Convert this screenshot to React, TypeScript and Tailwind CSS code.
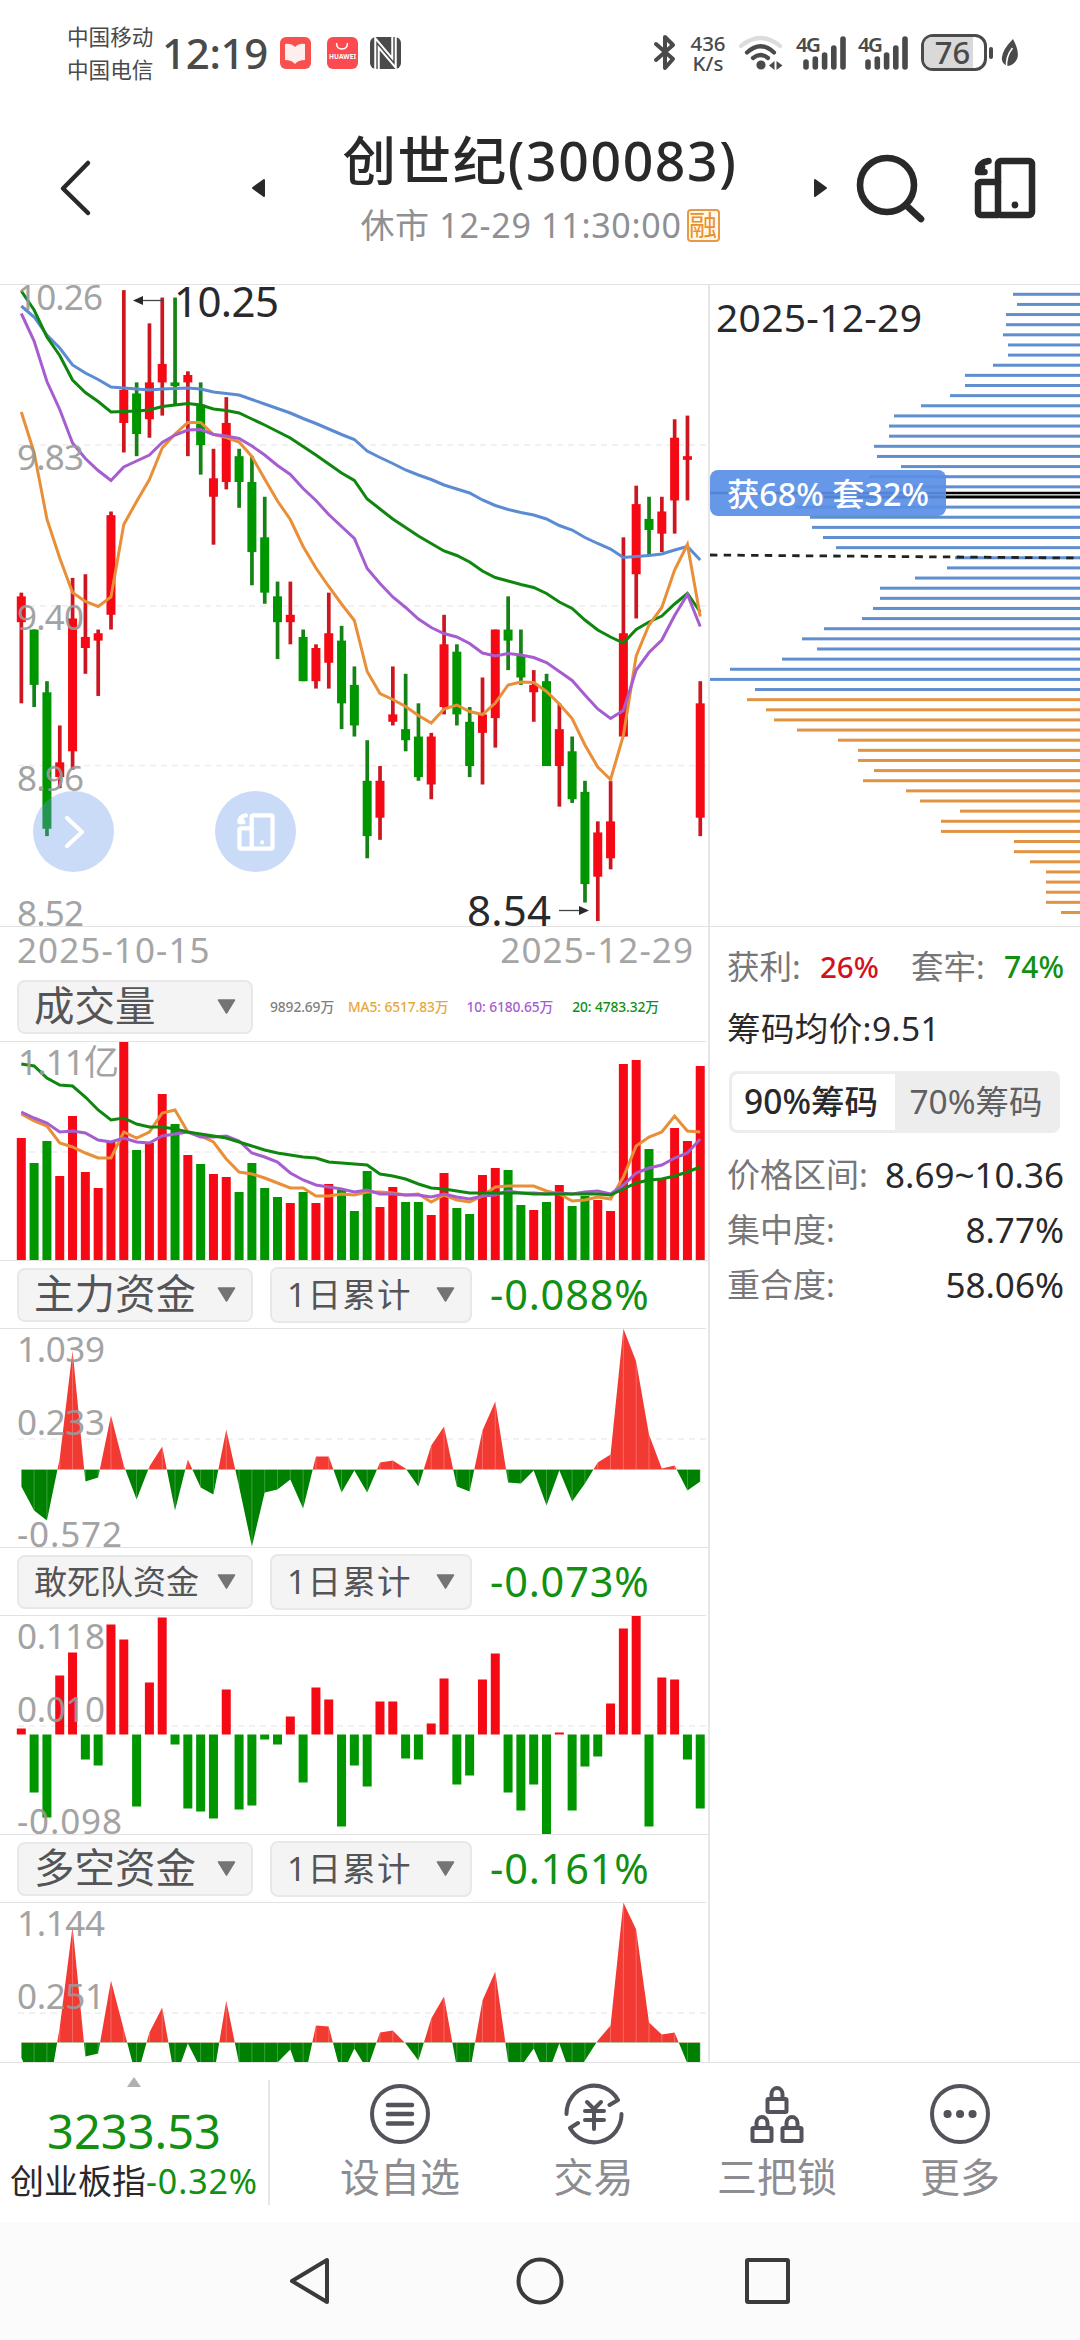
import type { ReactNode } from "react";

type Candle = [open: number, close: number, high: number, low: number];

// Prices in cents, 2025-10-15 .. 2025-12-29
const CANDLES: Candle[] = [
  [935, 942, 943, 913], [933, 918, 933, 912], [916, 879, 919, 877], [893, 897, 907, 890],
  [900, 936, 947, 895], [928, 931, 948, 921], [930, 932, 933, 915], [937, 964, 965, 933],
  [989, 998, 1025, 981], [997, 986, 1000, 980], [990, 1000, 1016, 985], [1000, 1005, 1023, 991],
  [1000, 999, 1023, 994], [1000, 1002, 1003, 980], [994, 983, 1000, 975], [969, 974, 982, 956],
  [973, 989, 996, 971], [980, 973, 982, 966], [973, 954, 980, 945], [958, 943, 969, 940],
  [942, 935, 946, 925], [935, 937, 946, 929], [931, 919, 933, 919], [919, 928, 929, 917],
  [924, 932, 943, 917], [930, 913, 934, 906], [918, 907, 923, 904], [892, 877, 903, 871],
  [882, 892, 896, 876], [908, 910, 923, 907], [906, 903, 921, 900], [904, 893, 913, 892],
  [891, 904, 905, 887], [912, 929, 937, 910], [927, 910, 929, 907], [908, 896, 912, 893],
  [905, 910, 920, 891], [909, 933, 933, 901], [933, 930, 942, 922], [926, 920, 933, 918],
  [916, 918, 922, 908], [919, 896, 921, 896], [896, 906, 913, 885], [900, 887, 904, 886],
  [889, 864, 892, 859], [866, 878, 881, 854], [871, 881, 892, 868], [904, 932, 958, 904],
  [948, 967, 972, 936], [963, 960, 969, 953], [959, 965, 969, 954], [968, 985, 990, 959],
  [979, 980, 991, 968], [882, 913, 919, 877],
];

const PRICE_LINES = [
  {
    color: "#5b8bd0",
    ys: [21, 32, 50, 63, 80, 88, 94.5, 102, 103, 104, 105, 104, 103.5, 103, 104, 107, 108.5, 110, 114.5, 119, 123.5, 128, 133.5, 138.5, 144, 149.5, 154.5, 166, 172.5, 178.5, 185, 190, 194.5, 200, 204, 208, 215, 220.5, 224.5, 227.5, 230, 234, 240.5, 245, 252.5, 258.5, 264, 272.5, 271.5, 270.5, 269, 265, 261.5, 275],
  },
  {
    color: "#0f870f",
    ys: [6, 25, 52, 70.5, 95, 107.5, 116.5, 127, 126.5, 126, 125, 121.5, 120, 118.5, 120, 124, 125.5, 128, 134, 140, 146.5, 153, 161.5, 170, 179, 188, 195.5, 214, 224, 234, 242.5, 251, 258.5, 266, 270.5, 277, 286, 292.5, 296, 299.5, 302.5, 308.5, 317, 323.5, 335, 345, 352, 358, 344.5, 337, 331, 319, 308.5, 327],
  },
  {
    color: "#e88f37",
    ys: [127, 167.5, 234, 273, 307.5, 316.5, 321.5, 312, 239.5, 216.5, 194.5, 163, 149, 137.5, 137.5, 149.5, 152.5, 157, 171.5, 194, 216, 234.5, 261.5, 283, 301.5, 319, 335.5, 386.5, 408.5, 414.5, 421.5, 430.5, 438, 424, 420, 426.5, 429.5, 418, 400, 397, 397.5, 406.5, 419, 433.5, 460, 482, 494.5, 450.5, 371, 340, 322.5, 285, 259.5, 331.5],
  },
  {
    color: "#a65dcf",
    ys: [28.5, 56, 96.5, 124.5, 158, 173.5, 185.5, 195.5, 182, 176, 170, 157.5, 150, 145, 144.5, 149.5, 151, 153.5, 161, 170, 180.5, 189.5, 203.5, 215.5, 229.5, 241.5, 253.5, 283.5, 298.5, 312, 322.5, 334, 342.5, 348.5, 352, 358.5, 368, 371, 368.5, 370, 372.5, 377.5, 386.5, 395.5, 410, 424, 433.5, 425.5, 385, 367.5, 355, 330.5, 309.5, 341.5],
  },
];

const VOLUMES = [123, 98, 120, 85, 145, 89, 73, 119, 219, 111, 118, 167, 137, 106, 97, 87, 84, 69, 98, 73, 64, 58, 69, 58, 77, 71, 50, 90, 54, 74, 59, 59, 46, 88, 53, 47, 86, 93, 91, 56, 51, 59, 76, 55, 65, 61, 50, 197, 201, 112, 82, 133, 120, 195];

const VOLUME_LINES = [
  {
    color: "#e88f37",
    ys: [72, 79, 84, 101, 105, 111, 116, 116, 90, 96, 90, 71, 68, 90, 94, 100, 117, 130, 132, 136, 141, 146, 146, 154, 154, 152, 153, 150, 150, 151, 153, 152, 160, 153, 158, 160, 154, 145, 144, 144, 144, 149, 152, 159, 158, 155, 157, 135, 104, 95, 90, 74, 89, 90],
  },
  {
    color: "#a65dcf",
    ys: [70, 76, 81, 90, 89, 91, 98, 100, 96, 100, 101, 94, 92, 90, 95, 95, 94, 99, 111, 115, 120, 131, 138, 143, 145, 147, 150, 148, 152, 152, 153, 153, 155, 152, 155, 157, 154, 153, 149, 151, 151, 152, 151, 152, 150, 149, 152, 143, 131, 126, 123, 116, 111, 97],
  },
  {
    color: "#0f870f",
    ys: [22, 24, 36, 43, 44, 55, 68, 78, 76, 82, 85, 85, 87, 90, 92, 94, 96, 100, 104, 108, 111, 113, 115, 116, 120, 121, 122, 123, 132, 134, 137, 142, 146, 147, 149, 151, 151, 151, 151, 151, 152, 152, 152, 152, 152, 152, 153, 147, 141, 138, 137, 134, 130, 125],
  },
];

const MAIN_FUNDS = [-17, -41, -51, 11, 119, -12, -8, 54, 4, -30, 3, 23, -41, 10, -18, -25, 40, -17, -77, -23, -20, -10, -39, 13, 13, -23, -1, -23, 7, 9, 1, -17, 24, 43, -17, -22, 39, 68, -13, -14, -1, -36, -1, -32, -14, 7, 15, 141, 108, 35, 1, 4, -21, -12];
const SQUAD_FUNDS = [6, -58, -83, 59, 82, -25, -31, 110, 95, -72, 52, 117, -10, -74, -77, -84, 45, -75, -71, -5, -10, 18, -48, 47, 35, -92, -31, -52, 33, 33, -24, -25, 11, 56, -50, -41, 55, 81, -58, -76, -50, -100, 2, -76, -32, -22, 31, 106, 119, -92, 57, 55, -25, -74];
const LONG_FUNDS = [-15, -45, -60, 15, 116, -14, -11, 62, 13, -36, 10, 35, -37, -1, -26, -35, 42, -21, -70, -35, -20, -7, -43, 17, 16, -33, -6, -27, 10, 12, -1, -18, 24, 46, -25, -31, 42, 71, -19, -24, -6, -35, -1, -37, -18, 2, 17, 140, 113, 20, 8, 10, -21, -21];

// Chip distribution, bar lengths measured from the right edge
const CHIPS_ABOVE = [67, 63, 74, 74, 77, 72, 72, 87, 115, 115, 130, 159, 186, 191, 191, 206, 203, 179, 211, 200, 256, 285, 270, 268, 257, 244, 125, 133, 165, 200, 200, 207, 218, 256, 278, 263, 298, 350, 371, 325];
const CHIPS_BELOW = [333, 314, 306, 283, 242, 222, 222, 206, 217, 174, 160, 120, 139, 139, 66, 66, 50, 34, 34, 34, 34, 19];

const x = (i: number) => 21.3 + 12.81 * i;
const priceY = (p: number) => (1026.4 - p) * 3.689;
const isUp = (c: Candle) => c[1] >= c[0];
const points = (ys: number[]) => ys.map((y, i) => `${x(i)},${y}`).join(" ");

function AxisLabel({ y, w, left = 17, children }: { y: number; w: number; left?: number; children: string }) {
  return (
    <text x={left} y={y} fontSize={35} textLength={w} fill="#9a9a9a" opacity={0.9}>
      {children}
    </text>
  );
}

function Grid({ y }: { y: number }) {
  return <line x1={18} x2={706} y1={y} y2={y} stroke="#ededed" strokeWidth={1.6} strokeDasharray="6 5" />;
}

function PriceChart() {
  return (
    <svg width={709} height={641} className="block">
      {[160, 321, 480.5].map((y) => (
        <Grid key={y} y={y} />
      ))}
      {CANDLES.map((c, i) => {
        const [o, cl, h, l] = c;
        const top = priceY(Math.max(o, cl));
        return (
          <g key={i}>
            <rect x={x(i) - 1.8} y={priceY(h)} width={3.7} height={priceY(l) - priceY(h)} fill={isUp(c) ? "#cd1620" : "#148214"} />
            <rect x={x(i) - 4.5} y={top} width={9} height={Math.max(3, priceY(Math.min(o, cl)) - top)} fill={isUp(c) ? "#f50914" : "#009600"} />
          </g>
        );
      })}
      {PRICE_LINES.map((l) => (
        <polyline key={l.color} points={points(l.ys)} fill="none" stroke={l.color} strokeWidth={3} />
      ))}
      <AxisLabel y={24.5} w={86}>10.26</AxisLabel>
      <AxisLabel y={185} w={67}>9.83</AxisLabel>
      <AxisLabel y={345} w={67}>9.40</AxisLabel>
      <AxisLabel y={506} w={67}>8.96</AxisLabel>
      <AxisLabel y={640.5} w={67}>8.52</AxisLabel>

      <path d="M142 15.5H163" stroke="#444" strokeWidth={1.3} />
      <path d="M133 15.5L143 11V20Z" fill="#29292b" />
      <text x={174} y={32} fontSize={42} textLength={105} fill="#29292b">10.25</text>
      <path d="M559 625.5H582" stroke="#444" strokeWidth={1.3} />
      <path d="M589 625.5L579 621V630Z" fill="#29292b" />
      <text x={467} y={640.5} fontSize={42} textLength={84} fill="#29292b">8.54</text>
    </svg>
  );
}

function ChipChart() {
  const bars = [...CHIPS_ABOVE, ...CHIPS_BELOW];
  return (
    <svg width={370} height={641} className="block">
      {bars.map((len, i) => (
        <rect
          key={i}
          x={370 - len}
          y={7.8 + i * 10.134}
          width={len}
          height={3}
          fill={i === 20 ? "#000" : i < CHIPS_ABOVE.length ? "#5f8fce" : "#e09342"}
        />
      ))}
      <line x1={0} x2={370} y1={208} y2={208} stroke="#000" strokeWidth={2.4} />
      <line x1={0} x2={370} y1={270} y2={273} stroke="#222" strokeWidth={2.8} strokeDasharray="7.4 6.3" />
      <text x={6} y={46.5} fontSize={39} textLength={206} fill="#29292b">2025-12-29</text>
    </svg>
  );
}

function VolumeChart() {
  return (
    <svg width={706} height={219} className="block">
      <Grid y={110} />
      {VOLUMES.map((v, i) => (
        <rect key={i} x={x(i) - 4.5} y={219 - v} width={9} height={v} fill={isUp(CANDLES[i]) ? "#f50914" : "#009600"} />
      ))}
      {VOLUME_LINES.map((l) => (
        <polyline key={l.color} points={points(l.ys)} fill="none" stroke={l.color} strokeWidth={3} />
      ))}
      <AxisLabel y={33} w={101} left={18}>1.11亿</AxisLabel>
    </svg>
  );
}

function FundLabels({ labels }: { labels: string[] }) {
  return (
    <>
      {labels.map((label, i) => (
        <AxisLabel key={label} y={[33, 106, 218][i]} w={i === 2 ? 105 : 88}>
          {label}
        </AxisLabel>
      ))}
    </>
  );
}

function AreaChart({ id, data, zero, labels }: { id: string; data: number[]; zero: number; labels: string[] }) {
  const d = `M${x(0)} ${zero}` + data.map((v, i) => `L${x(i)} ${zero - v}`).join("") + `L${x(53)} ${zero}Z`;
  return (
    <svg width={706} height={219} className="block">
      <clipPath id={`${id}-up`}>
        <rect x={0} y={0} width={706} height={zero} />
      </clipPath>
      <clipPath id={`${id}-down`}>
        <rect x={0} y={zero} width={706} height={219 - zero} />
      </clipPath>
      <Grid y={110} />
      <path d={d} fill="#f33a32" clipPath={`url(#${id}-up)`} />
      <path d={d} fill="#008000" clipPath={`url(#${id}-down)`} />
      {data.map((v, i) => (
        <line key={i} x1={x(i)} x2={x(i)} y1={zero} y2={zero - v} stroke="#fff" strokeWidth={0.8} opacity={0.3} />
      ))}
      <FundLabels labels={labels} />
    </svg>
  );
}

function BarChart({ data, zero, labels }: { data: number[]; zero: number; labels: string[] }) {
  return (
    <svg width={706} height={219} className="block">
      <Grid y={110} />
      {data.map((v, i) => (
        <rect key={i} x={x(i) - 4.5} y={v > 0 ? zero - v : zero} width={9} height={Math.abs(v)} fill={v > 0 ? "#f50914" : "#009600"} />
      ))}
      <FundLabels labels={labels} />
    </svg>
  );
}

function Caret() {
  return (
    <svg width={19} height={15} viewBox="0 0 19 15" className="shrink-0">
      <path d="M1.5 1H17.5L9.5 14Z" fill="#747476" stroke="#747476" strokeWidth={1.5} strokeLinejoin="round" />
    </svg>
  );
}

function PanelHeader({ title, small, children }: { title: string; small?: boolean; children: ReactNode }) {
  return (
    <div className="flex h-[67px] items-center pl-[17px]">
      <div className="flex h-[54px] w-[236px] shrink-0 items-center justify-between rounded-lg border-2 border-[#e8e8e8] bg-[#f4f4f4] pl-[15px] pr-[15px] text-[#555557]">
        <span className={small ? "text-[33px] leading-none" : "text-[40.5px] leading-none"}>{title}</span>
        <Caret />
      </div>
      {children}
    </div>
  );
}

function Period({ value }: { value: string }) {
  return (
    <>
      <div className="ml-[17px] flex h-[56px] w-[202px] shrink-0 items-center justify-between rounded-lg border-2 border-[#e8e8e8] bg-[#f4f4f4] pl-[15px] pr-[15px] text-[#555557]">
        <span className="text-[33.5px] leading-none tracking-[1.3px]">1日累计</span>
        <Caret />
      </div>
      <span className="ml-[18px] text-[41.5px] leading-none tracking-[0.8px] text-[#119011]">{value}</span>
    </>
  );
}

function DeviceIcon({ size, color, stroke }: { size: number; color: string; stroke: number }) {
  return (
    <svg width={size} height={size} viewBox="0 0 62 62" fill="none" stroke={color} strokeWidth={stroke} strokeLinejoin="round" strokeLinecap="round">
      <rect x={24} y={4} width={34} height={54} rx={3} />
      <path d="M24 25H7a3 3 0 0 0-3 3V55a3 3 0 0 0 3 3H24" />
      <path d="M14.5 4C8 5 4 9 4 15H10.5Q5 14 8 10" />
      <circle cx={41} cy={48} r={3.4} fill={color} stroke="none" />
    </svg>
  );
}

function Signal() {
  return (
    <div className="flex h-[34px] w-[51px] shrink-0">
      <svg width={51} height={34} stroke="#4a4a4a" strokeWidth={5.6} strokeLinecap="round" className="overflow-visible">
        <text x={0} y={16} fontSize={20.5} fontWeight={600} textLength={25} fill="#4a4a4a" stroke="none">4G</text>
        <path d="M10 26V31M19.3 23V31M28.6 19V31M37.8 12V31M47 3V31" />
      </svg>
    </div>
  );
}

function StatusBar() {
  return (
    <div className="flex h-[105px] items-center pl-[67px] text-[#4a4a4a]">
      <div className="w-[87px] shrink-0 whitespace-nowrap text-[21.6px] leading-[33px]">
        <p>中国移动</p>
        <p>中国电信</p>
      </div>
      <span className="ml-[8px] w-[106px] shrink-0 text-[42px] font-medium leading-none tracking-[-0.3px]">12:19</span>
      <svg width={122} height={34} className="ml-[11px] shrink-0">
        <rect x={1} y={1} width={31} height={32} rx={6} fill="#f8504f" />
        <path d="M6 8q6-1 10 3q4-4 10-3v16q-7 0-10 4q-3-4-10-4z" fill="#fff" opacity={0.9} />
        <rect x={48} y={1} width={31} height={32} rx={6} fill="#fb4a50" />
        <path d="M57.5 7q0 6 5.5 6t5.5-6" fill="none" stroke="#fff" strokeWidth={1.4} />
        <text x={50} y={23} fontSize={6.5} fontWeight={700} textLength={27} fill="#fff">HUAWEI</text>
        <rect x={91} y={1} width={31} height={32} rx={6} fill="#4a4a4a" />
        <path d="M98 33V7L115 27V1" fill="none" stroke="#fff" strokeWidth={5.5} />
        <path d="M98 33V7L115 27V1" fill="none" stroke="#4a4a4a" strokeWidth={1.4} />
      </svg>

      <svg width={24} height={37} viewBox="0 0 24 37" className="ml-[252px] shrink-0" fill="none" stroke="#4a4a4a" strokeWidth={4} strokeLinecap="round" strokeLinejoin="round">
        <path d="M3 10L20 25L12 34V3L20 11L3 26" />
      </svg>
      <div className="ml-[11px] w-[40px] shrink-0 text-center text-[20.5px] font-medium leading-[20px]">
        <p>436</p>
        <p>K/s</p>
      </div>
      <svg width={46} height={36} viewBox="0 0 46 36" className="ml-[10px] shrink-0" fill="none" strokeWidth={4.2} strokeLinecap="round">
        <path d="M3 11Q22.5-5 42 11" stroke="#dcdcdc" />
        <path d="M9 17.5Q22.5 5 36 17.5M15 23Q22.5 17 30 23" stroke="#4a4a4a" />
        <circle cx={23} cy={30} r={4.6} fill="#4a4a4a" />
        <path d="M31 30.5L36.5 26V35ZM44.5 30.5L38.5 26V35Z" fill="#4a4a4a" />
      </svg>
      <div className="ml-[12px]">
        <Signal />
      </div>
      <div className="ml-[11px]">
        <Signal />
      </div>
      <div className="ml-[12px] flex h-[37px] w-[66px] shrink-0 items-center rounded-xl border-[3px] border-[#4a4a4a] bg-white">
        <div className="flex h-full w-[49px] items-center justify-center rounded-l-lg bg-[#d9d9d9] pl-[8px] text-[31px] font-medium leading-none">
          76
        </div>
      </div>
      <div className="ml-[2px] h-[12px] w-[4px] shrink-0 rounded bg-[#4a4a4a]" />
      <svg width={20} height={30} viewBox="0 0 20 30" className="ml-[7px] shrink-0">
        <path d="M13 1Q20 14 17 21Q14 27 8 28Q1 26 2 19Q3 11 13 1Z" fill="#4a4a4a" />
        <path d="M12.5 10Q6 18 6.5 29" fill="none" stroke="#fff" strokeWidth={1.6} />
      </svg>
    </div>
  );
}

function TitleBar() {
  return (
    <div className="flex h-[179px] text-[#29292b]">
      <svg width={40} height={60} viewBox="0 0 40 60" className="ml-[55px] mt-[53px] shrink-0" fill="none" stroke="#29292b" strokeWidth={4.5} strokeLinecap="round" strokeLinejoin="round">
        <path d="M33 5L8 30.5L33 55" />
      </svg>
      <svg width={16} height={20} className="ml-[156px] mt-[73px] shrink-0">
        <path d="M2 10L13 2V18Z" fill="#29292b" stroke="#29292b" strokeWidth={2} strokeLinejoin="round" />
      </svg>
      <div className="flex w-[546px] shrink-0 flex-col items-center">
        <h1 className="mt-[26px] whitespace-nowrap text-[53.5px] font-medium leading-[60px] tracking-[1.6px]">创世纪(300083)</h1>
        <div className="mt-[14px] flex items-center gap-[5px] whitespace-nowrap text-[34px] leading-[40px] text-[#8f9094]">
          <span className="tracking-[0.7px]">休市 12-29 11:30:00</span>
          <span className="flex h-[33px] w-[33px] items-center justify-center rounded border-2 border-[#e59a47] bg-[#fff8e6] text-[28px] leading-none text-[#ea8f2c]">
            融
          </span>
        </div>
      </div>
      <svg width={16} height={20} className="-ml-[1px] mt-[73px] shrink-0">
        <path d="M14 10L3 2V18Z" fill="#29292b" stroke="#29292b" strokeWidth={2} strokeLinejoin="round" />
      </svg>
      <svg width={70} height={70} viewBox="0 0 70 70" className="ml-[28px] mt-[48px] shrink-0" fill="none" stroke="#29292b" strokeLinecap="round">
        <circle cx={31} cy={32} r={27} strokeWidth={6.6} />
        <path d="M52 54L65 66" strokeWidth={6.6} />
      </svg>
      <div className="ml-[48px] mt-[52px]">
        <DeviceIcon size={62} color="#29292b" stroke={6.5} />
      </div>
    </div>
  );
}

function ChipStats() {
  return (
    <div className="flex flex-1 flex-col border-t-[1.5px] border-[#e2e2e2] pl-[17px] pr-[16px] text-[#29292b]">
      <div className="mt-[20px] flex h-[40px] items-center justify-between leading-none">
        <span className="text-[32.5px] text-[#77777a]">获利:</span>
        <span className="text-[29.5px] font-medium text-[#d0141f]">26%</span>
        <span className="ml-[13px] text-[32.5px] text-[#77777a]">套牢:</span>
        <span className="text-[30px] font-medium text-[#119011]">74%</span>
      </div>
      <p className="mt-[21px] text-[33.5px] leading-[40px] tracking-[0.4px]">筹码均价:9.51</p>
      <div className="ml-[2px] mt-[23px] flex h-[62px] w-[331px] rounded-lg bg-[#ededed] p-[3px] text-[33.5px] leading-none">
        <div className="flex w-[163px] items-center justify-center whitespace-nowrap rounded-l-md bg-white pr-[5px] font-medium">90%筹码</div>
        <div className="flex flex-1 items-center justify-center whitespace-nowrap text-[#606062]">70%筹码</div>
      </div>
      <dl className="mt-[14px]">
        {[
          ["价格区间:", "8.69~10.36"],
          ["集中度:", "8.77%"],
          ["重合度:", "58.06%"],
        ].map(([k, v]) => (
          <div key={k} className="flex h-[55px] items-center justify-between whitespace-nowrap leading-[55px]">
            <dt className="text-[33px] text-[#77777a]">{k}</dt>
            <dd className="text-[35px]">{v}</dd>
          </div>
        ))}
      </dl>
    </div>
  );
}

function TabItem({ label, className, children }: { label: string; className: string; children: ReactNode }) {
  return (
    <div className={`flex shrink-0 flex-col items-center ${className}`}>
      <svg width={62} height={62} viewBox="-31 -31 62 62" className="mt-[20px]" fill="none" stroke="#53535b" strokeWidth={4} strokeLinecap="round" strokeLinejoin="round">
        {children}
      </svg>
      <span className="mt-[8px] whitespace-nowrap text-[40px] leading-[48px] text-[#8d8d91]">{label}</span>
    </div>
  );
}

function Lock({ cx, cy }: { cx: number; cy: number }) {
  return (
    <g transform={`translate(${cx} ${cy})`}>
      <rect x={-9.5} y={-1} width={19} height={13} rx={1} />
      <path d="M-5.5-2V-6a5.5 6 0 0 1 11 0V-2" />
    </g>
  );
}

function BottomBar() {
  return (
    <div className="flex h-[160px] border-t-[1.5px] border-[#e2e2e2]">
      <div className="flex w-[268px] shrink-0 flex-col items-center">
        <svg width={16} height={12} className="mt-[13px]">
          <path d="M8 1L15 11H1Z" fill="#b0b0b2" />
        </svg>
        <span className="mt-[16px] text-[47px] leading-[54px] text-[#119011]">3233.53</span>
        <span className="whitespace-nowrap text-[34px] leading-[47px] text-[#29292b]">
          创业板指<span className="tracking-[0.9px] text-[#119011]">-0.32%</span>
        </span>
      </div>
      <div className="mt-[17px] h-[125px] w-[2px] shrink-0 bg-[#e6e6e6]" />
      <TabItem label="设自选" className="ml-[30px] w-[200px]">
        <circle r={28} />
        <path d="M-12-9H12M-12 0H12M-12 9.5H12" strokeWidth={4.5} />
      </TabItem>
      <TabItem label="交易" className="w-[187px]">
        <path d="M-27.5 0A27.5 28 0 0 1 24-14L15.5-9M27.5 0A27.5 28 0 0 1-24 14L-16 9" />
        <path d="M-7-12L0-5L7-12M0-5V15M-9-3H10M-9 6H10" />
      </TabItem>
      <TabItem label="三把锁" className="w-[180px]">
        <Lock cx={0} cy={-14} />
        <Lock cx={-15} cy={15} />
        <Lock cx={15} cy={15} />
      </TabItem>
      <TabItem label="更多" className="w-[186px]">
        <circle r={28} />
        <path d="M-12.5 0H-12.4M0 0H.1M12.5 0H12.6" strokeWidth={8} />
      </TabItem>
    </div>
  );
}

function NavBar() {
  return (
    <div className="flex h-[118px] items-center justify-center gap-[175px] bg-[#fbfbfb]">
      <svg width={50} height={50} fill="none" stroke="#3a3a3a" strokeWidth={4} strokeLinejoin="round">
        <path d="M2 25L37 4V46Z" />
      </svg>
      <svg width={50} height={50} fill="none" stroke="#3a3a3a" strokeWidth={4}>
        <circle cx={25} cy={25} r={21.5} />
      </svg>
      <svg width={50} height={50} fill="none" stroke="#3a3a3a" strokeWidth={4} strokeLinejoin="round">
        <rect x={7} y={4} width={41} height={42} rx={1} />
      </svg>
    </div>
  );
}

const LINE = "border-t-[1.5px] border-[#e2e2e2]";

export default function App() {
  return (
    <div className="flex h-[2340px] w-[1080px] flex-col overflow-hidden bg-white font-['Noto_Sans','Noto_Sans_CJK_SC',sans-serif]">
      <StatusBar />
      <TitleBar />

      <div className="flex h-[1778px] shrink-0 overflow-hidden border-t-[1.5px] border-[#e2e2e2]">
        <div className="w-[710px] shrink-0 border-r-2 border-[#e6e6e6]">
          <div className="relative h-[641px]">
            <PriceChart />
            <button className="absolute left-[33px] top-[506px] flex h-[81px] w-[81px] items-center justify-center rounded-full bg-[#6798e8]/35">
              <svg width={24} height={36} fill="none" stroke="#fff" strokeWidth={4.2} strokeLinecap="round" strokeLinejoin="round">
                <path d="M5 4L20 18L5 32" />
              </svg>
            </button>
            <button className="absolute left-[215px] top-[506px] flex h-[81px] w-[81px] items-center justify-center rounded-full bg-[#6798e8]/35">
              <DeviceIcon size={38} color="#fff" stroke={7} />
            </button>
          </div>
          <div className={`flex h-[47px] justify-between pl-[17px] pr-[14px] text-[35px] leading-[46px] tracking-[1.1px] text-[#a5a5a5] ${LINE}`}>
            <span>2025-10-15</span>
            <span>2025-12-29</span>
          </div>

          <div className="h-[68px]">
            <PanelHeader title="成交量">
              <div className="ml-[17px] flex w-[389px] justify-between whitespace-nowrap text-[13.8px] font-medium leading-none tracking-[-0.1px]">
                <span className="text-[#808080]">9892.69万</span>
                <span className="text-[#e8a838]">MA5: 6517.83万</span>
                <span className="ml-[4px] text-[#a65dcf]">10: 6180.65万</span>
                <span className="ml-[5px] text-[#119011]">20: 4783.32万</span>
              </div>
            </PanelHeader>
          </div>
          <div className={`h-[219px] w-[706px] overflow-hidden ${LINE}`}>
            <VolumeChart />
          </div>

          <div className={`h-[68px] ${LINE}`}>
            <PanelHeader title="主力资金">
              <Period value="-0.088%" />
            </PanelHeader>
          </div>
          <div className={`h-[219px] w-[706px] overflow-hidden ${LINE}`}>
            <AreaChart id="main" data={MAIN_FUNDS} zero={140.5} labels={["1.039", "0.233", "-0.572"]} />
          </div>

          <div className={`h-[68px] ${LINE}`}>
            <PanelHeader title="敢死队资金" small>
              <Period value="-0.073%" />
            </PanelHeader>
          </div>
          <div className={`h-[219px] w-[706px] overflow-hidden ${LINE}`}>
            <BarChart data={SQUAD_FUNDS} zero={118.5} labels={["0.118", "0.010", "-0.098"]} />
          </div>

          <div className={`h-[68px] ${LINE}`}>
            <PanelHeader title="多空资金">
              <Period value="-0.161%" />
            </PanelHeader>
          </div>
          <div className={`h-[219px] w-[706px] overflow-hidden ${LINE}`}>
            <AreaChart id="long" data={LONG_FUNDS} zero={139.5} labels={["1.144", "0.251"]} />
          </div>
        </div>

        <div className="flex w-[370px] shrink-0 flex-col">
          <div className="relative h-[641px]">
            <ChipChart />
            <div className="absolute left-0 top-[185px] flex h-[46px] w-[236px] items-center justify-center whitespace-nowrap rounded-lg bg-[#5a8fe6]/92 text-[32.3px] font-medium leading-none text-white">
              获68% 套32%
            </div>
          </div>
          <ChipStats />
        </div>
      </div>

      <BottomBar />
      <NavBar />
    </div>
  );
}
